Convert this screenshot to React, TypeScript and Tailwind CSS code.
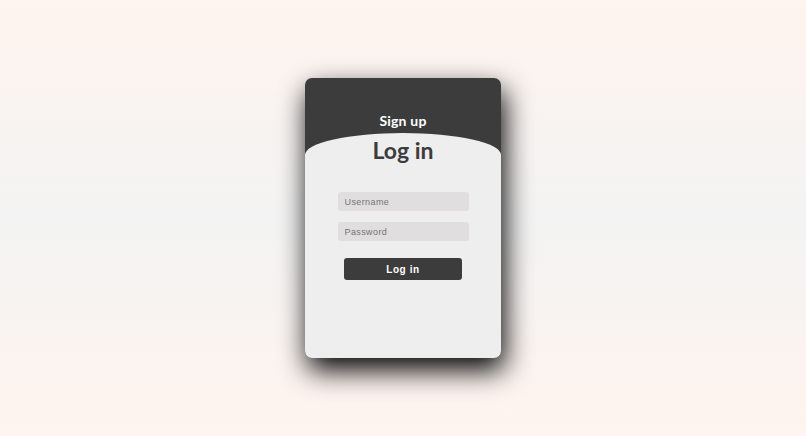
export default function App() {
  return (
    <div className="flex min-h-screen items-center justify-center bg-[linear-gradient(to_bottom,#fff4ef,#f3f3f3_50%,#fff4ef)] font-['Lato',sans-serif]">
      <div className="flex h-[280px] w-[196px] flex-col overflow-hidden rounded-[7px] bg-[#3c3c3c] shadow-[3px_12px_28px_#000]">
        <div className="flex h-[55px] flex-col items-center justify-end pb-[5px]">
          <span className="text-[14px] font-bold leading-none tracking-[0.2px] text-white">Sign up</span>
        </div>
        <div className="flex flex-1 flex-col items-center rounded-t-[50%_22px] bg-[#eeeeee] pt-[5px]">
          <h1 className="text-[23px] font-bold leading-[24px] text-[#3c3c3c]">Log in</h1>
          <div className="mt-[30px] flex w-[131px] flex-col gap-[11px]">
            <input
              placeholder="Username"
              className="h-[19px] w-full rounded-[3px] bg-[#e0dede] px-[7px] font-['Liberation_Sans',sans-serif] text-[9px] tracking-[0.4px] text-[#555] outline-none placeholder:text-[#777373]"
            />
            <input
              placeholder="Password"
              type="password"
              className="h-[19px] w-full rounded-[3px] bg-[#e0dede] px-[7px] font-['Liberation_Sans',sans-serif] text-[9px] tracking-[0.4px] text-[#555] outline-none placeholder:text-[#777373]"
            />
          </div>
          <button className="mt-[17px] h-[22px] w-[118px] rounded-[3px] bg-[#3c3c3c] font-['Liberation_Sans',sans-serif] text-[10px] font-bold tracking-[0.6px] text-white">
            Log in
          </button>
        </div>
      </div>
    </div>
  );
}
